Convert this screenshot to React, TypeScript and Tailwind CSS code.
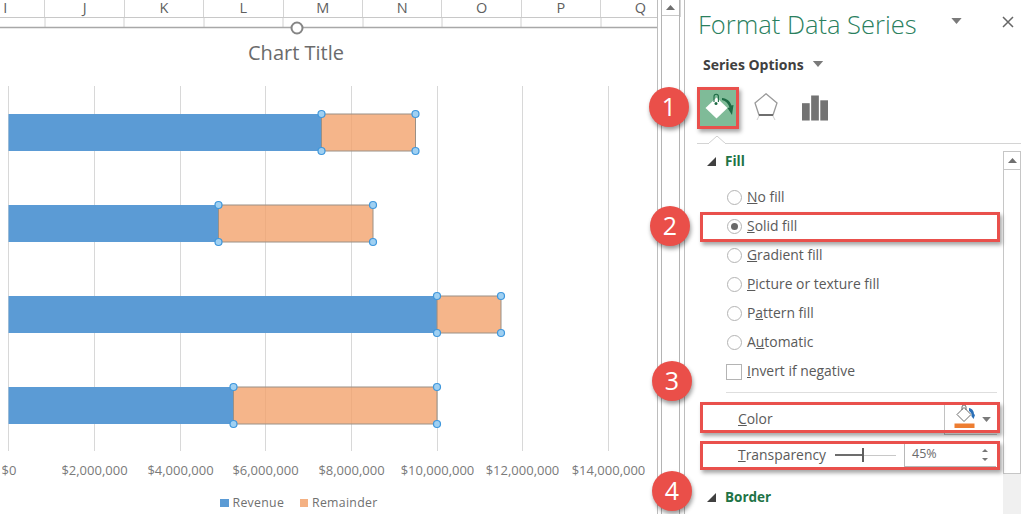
import React from "react";

const cols = ["I", "J", "K", "L", "M", "N", "O", "P", "Q"];
const grid = [8, 94, 180, 265, 351, 437, 522, 608];
const axis = ["$0", "$2,000,000", "$4,000,000", "$6,000,000", "$8,000,000", "$10,000,000", "$12,000,000", "$14,000,000"];
const bars = [
  { y: 114, mid: 321.5, end: 415.5 },
  { y: 205, mid: 218.5, end: 373 },
  { y: 296, mid: 437, end: 501 },
  { y: 387, mid: 233.5, end: 437 },
];

function Handle({ x, y }: { x: number; y: number }) {
  return <circle cx={x} cy={y} r={3.5} fill="#9fd0f2" stroke="#3f97dc" strokeWidth={1.2} />;
}

function Chart() {
  return (
    <svg viewBox="0 18 657 496" className="block w-[657px] h-[496px] font-['Open_Sans',sans-serif]">
      {[45, 124, 204, 283, 363, 442, 521, 601].map((x) => (
        <line key={x} x1={x} x2={x} y1={18} y2={27} stroke="#d0d0d0" />
      ))}
      <line x1={0} x2={657} y1={27.5} y2={27.5} stroke="#a8a8a8" strokeWidth={1.5} />
      <circle cx={297} cy={28} r={5.5} fill="#fff" stroke="#858585" strokeWidth={2} />
      <text x={296} y={60} textAnchor="middle" fontSize={20} fill="#6b6b6b">Chart Title</text>
      {grid.map((x) => (
        <line key={x} x1={x + 0.5} x2={x + 0.5} y1={86} y2={451} stroke="#d8d8d8" />
      ))}
      {bars.map((b) => (
        <g key={b.y}>
          <rect x={8.5} y={b.y} width={b.mid - 8.5} height={37} fill="#5b9bd5" />
          <rect x={b.mid} y={b.y} width={b.end - b.mid} height={37} fill="#f2a26d" fillOpacity={0.8} stroke="#9a9086" strokeWidth={1} />
          <Handle x={b.mid} y={b.y} />
          <Handle x={b.mid} y={b.y + 37} />
          <Handle x={b.end} y={b.y} />
          <Handle x={b.end} y={b.y + 37} />
        </g>
      ))}
      {axis.map((t, i) => (
        <text key={t} x={i === 0 ? 9 : grid[i] + 0.5} y={475} textAnchor="middle" fontSize={13} fill="#7a7a7a">{t}</text>
      ))}
      <rect x={220} y={499} width={9} height={8} fill="#5b9bd5" />
      <text x={232.5} y={507} fontSize={12.3} fill="#707070" letterSpacing={0.3}>Revenue</text>
      <rect x={300} y={499} width={8} height={8} fill="#f4b183" />
      <text x={312} y={507} fontSize={12.3} fill="#707070" letterSpacing={0.3}>Remainder</text>
    </svg>
  );
}

function Tri({ className }: { className: string }) {
  return (
    <svg viewBox="0 0 12 7" className={className}>
      <path d="M0 0h12L6 7z" fill="#7a7a7a" />
    </svg>
  );
}

function Expand() {
  return (
    <svg viewBox="0 0 9 9" className="w-[9px] h-[9px] mr-[9px]">
      <path d="M9 0v9H0z" fill="#404040" />
    </svg>
  );
}

function Radio({ u, pre, post, checked }: { u: string; pre?: string; post: string; checked?: boolean }) {
  return (
    <div className="h-[29px] flex items-center pl-[42px] text-[13.9px] text-[#5a5a5a]">
      <span className="w-[15px] h-[15px] rounded-full border border-[#b4b4b4] bg-white flex items-center justify-center mr-[5px]">
        {checked && <span className="w-[7px] h-[7px] rounded-full bg-[#6a6a6a]" />}
      </span>
      <span>
        {pre}
        <u>{u}</u>
        {post}
      </span>
    </div>
  );
}

function Callout({ n, className }: { n: number; className: string }) {
  return (
    <div className={"absolute w-[40px] h-[40px] rounded-full bg-[#ea4f49] text-white text-[25px] flex items-center justify-center shadow-[1px_3px_4px_rgba(0,0,0,0.4)] " + className}>
      {n}
    </div>
  );
}

function RedBox({ className }: { className: string }) {
  return <div className={"absolute border-[3px] border-[#e9504c] shadow-[2px_3px_4px_rgba(0,0,0,0.35)] " + className} />;
}

export default function App() {
  return (
    <div className="relative w-[1024px] h-[514px] overflow-hidden bg-white flex font-['Open_Sans',sans-serif]">
      {/* sheet */}
      <div className="w-[658px] shrink-0 border-r border-[#bdbdbd]">
        <div className="h-[18px] flex border-b border-[#c8c8c8] -ml-[34px] text-[14.5px] text-[#5f5f5f]">
          {cols.map((c) => (
            <div key={c} className="w-[79.4px] shrink-0 h-[17px] border-r border-[#d4d4d4] flex items-center justify-center leading-none">
              {c}
            </div>
          ))}
        </div>
        <Chart />
      </div>

      {/* sheet scrollbar */}
      <div className="ml-[3px] w-[19px] shrink-0 border-x border-[#b4b4b4]">
        <div className="h-[16px] border-b border-[#c8c8c8] flex items-center justify-center">
          <svg viewBox="0 0 9 5" className="w-[9px] h-[5px]"><path d="M4.5 0L9 5H0z" fill="#6f6f6f" /></svg>
        </div>
      </div>

      {/* pane */}
      <div className="ml-[4px] w-[340px] shrink-0 border-l border-[#bdbdbd]">
        <div className="h-[50px] flex items-center pl-[13px]">
          <span className="text-[25.5px] font-light text-[#2a7f5e] leading-none">Format Data Series</span>
          <Tri className="w-[11px] h-[6px] ml-[34px] -mt-[8px]" />
          <svg viewBox="0 0 12 12" className="w-[12px] h-[12px] ml-[40px] -mt-[6px]">
            <path d="M1 1l10 10M11 1L1 11" stroke="#666" strokeWidth={1.5} />
          </svg>
        </div>
        <div className="h-[30px] flex items-center pl-[18px] -mt-px">
          <span className="text-[14px] font-bold text-[#404040]">Series Options</span>
          <Tri className="w-[12px] h-[6px] ml-[8px]" />
        </div>
        <div className="h-[65px] relative border-b border-[#d4d4d4] mr-[3px] ml-[12px]">
          <div className="flex items-center h-[57px]">
            <div className="w-[42px] h-[42px] bg-[#7fbb98] flex items-center justify-center">
              <svg viewBox="0 0 36 36" className="w-[36px] h-[36px]">
                <path d="M16.5 7.5L27.5 18 16.5 28.5 5.5 18z" fill="#fff" />
                <path d="M14 12V6.5a2.2 2.2 0 0 1 4.4 0V12" fill="none" stroke="#1e6b45" strokeWidth={1.1} />
                <circle cx={16} cy={13.5} r={1.5} fill="#1e6b45" />
                <path d="M22 8C27 8.500 30 11 31.500 15.500L33.500 15 32 25 27.500 18 29.500 17.500C28.500 14 26 11 22 10z" fill="#1e6b45" />
              </svg>
            </div>
            <svg viewBox="0 0 24 27" className="w-[24px] h-[27px] ml-[15px] -mt-[3px]">
              <path d="M12 .8L23 10 19 22H5L1 10z" fill="none" stroke="#9a9a9a" strokeWidth={1.3} />
              <path d="M5 22h14" stroke="#6f6f6f" strokeWidth={2} />
              <path d="M5 23l-2 4M19 23l2 4" stroke="#cfcfcf" strokeWidth={1} />
            </svg>
            <svg viewBox="0 0 27 26" className="w-[26px] h-[26px] ml-[24px]" fill="#737373">
              <rect x={0} y={8} width={8} height={18} />
              <rect x={9.5} y={0} width={8} height={26} />
              <rect x={19} y={5} width={8} height={21} />
            </svg>
          </div>
          <svg viewBox="0 0 18 8" className="absolute left-[11px] -bottom-px w-[18px] h-[8px]">
            <path d="M0 8L9 0l9 8" fill="#fff" stroke="#d0d0d0" />
            <path d="M1 7.8h16" stroke="#fff" strokeWidth={1.4} />
          </svg>
        </div>

        <div className="flex mt-[7px]">
          <div className="w-[318px] shrink-0">
            <div className="h-[20px] flex items-center pl-[22px] text-[13.5px] font-bold text-[#217346]">
              <Expand />
              Fill
            </div>
            <div className="h-[12px]" />
            <Radio u="N" post="o fill" />
            <Radio u="S" post="olid fill" checked />
            <Radio u="G" post="radient fill" />
            <Radio u="P" post="icture or texture fill" />
            <Radio pre="P" u="a" post="ttern fill" />
            <Radio pre="A" u="u" post="tomatic" />
            <div className="h-[29px] flex items-center pl-[41px] text-[13.9px] text-[#5a5a5a]">
              <span className="w-[16px] h-[16px] border border-[#b4b4b4] mr-[5px]" />
              <span><u>I</u>nvert if negative</span>
            </div>
            <div className="ml-[41px] mr-[6px] mt-[6px] border-t border-[#dedede]" />
            <div className="h-[29px] mt-[12px] ml-[53px] mr-[6px] flex items-center justify-between text-[13.9px] text-[#5a5a5a]">
              <span><u>C</u>olor</span>
              <div className="w-[53px] h-[31px] border-l border-b border-[#c2c2c2] flex items-center pl-[9px]">
                <svg viewBox="0 0 22 24" className="w-[22px] h-[24px] -mt-[6px]">
                  <path d="M10 3.500l7 7-7 7-7-7z" fill="#fff" stroke="#6a6a6a" strokeWidth={1} />
                  <path d="M8 6V3a2 2 0 0 1 4 0v3" fill="none" stroke="#6a6a6a" />
                  <path d="M15 4c3 .5 5 3 5 6l1 1-1.500 4-2.500-3.500 1-.2c-.3-1.500-1.500-3.500-3-4.300z" fill="#2b70b8" />
                  <rect x={0.5} y={19.5} width={20} height={4.5} fill="#ed7d31" />
                </svg>
                <Tri className="w-[9px] h-[5px] ml-[6px]" />
              </div>
            </div>
            <div className="h-[28px] mt-[7px] ml-[53px] mr-[6px] flex items-center text-[13.9px] text-[#5a5a5a]">
              <span className="w-[97px]"><u>T</u>ransparency</span>
              <div className="w-[61px] h-[14px] relative flex items-center">
                <div className="w-[28px] h-[2px] bg-[#6d6d6d]" />
                <div className="w-[33px] h-[1px] bg-[#c8c8c8]" />
                <div className="absolute left-[27px] top-0 w-[1.5px] h-[14px] bg-[#5f5f5f]" />
              </div>
              <div className="ml-[8px] w-[92px] h-[24px] border-l border-b border-[#b8b8b8] flex items-center pl-[7px] text-[12.5px] text-[#6b6b6b]">
                <span className="flex-1">45%</span>
                <span className="w-[9px] mr-[5px] flex flex-col gap-[6px]">
                  <svg viewBox="0 0 6 3" className="w-[6px] h-[3px]"><path d="M3 0l3 3H0z" fill="#777" /></svg>
                  <svg viewBox="0 0 6 3" className="w-[6px] h-[3px]"><path d="M3 3l3-3H0z" fill="#777" /></svg>
                </span>
              </div>
            </div>
            <div className="h-[20px] mt-[18px] flex items-center pl-[22px] text-[13.5px] font-bold text-[#217346]">
              <Expand />
              Border
            </div>
          </div>
          <div className="w-[18px] shrink-0 self-start">
            <div className="h-[323px] border border-[#c6c6c6] bg-white">
              <div className="h-[18px] border-b border-[#c6c6c6] flex items-center justify-center">
                <svg viewBox="0 0 9 5" className="w-[9px] h-[5px]"><path d="M4.5 0L9 5H0z" fill="#6f6f6f" /></svg>
              </div>
            </div>
            <div className="h-[40px] bg-[#f0f0f0]" />
          </div>
        </div>
      </div>

      {/* annotations */}
      <RedBox className="left-[697px] top-[87px] w-[42px] h-[42px]" />
      <RedBox className="left-[700px] top-[212px] w-[300px] h-[30px]" />
      <RedBox className="left-[700px] top-[402px] w-[300px] h-[31px]" />
      <RedBox className="left-[700px] top-[441px] w-[300px] h-[29px]" />
      <Callout n={1} className="left-[649px] top-[87px]" />
      <Callout n={2} className="left-[650px] top-[206px]" />
      <Callout n={3} className="left-[652px] top-[361px]" />
      <Callout n={4} className="left-[652px] top-[471px]" />
    </div>
  );
}
